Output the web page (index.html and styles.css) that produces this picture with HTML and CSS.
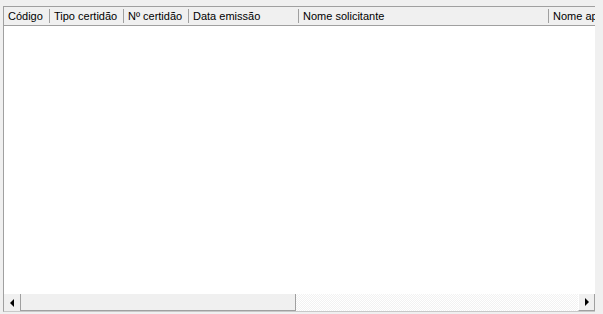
FILE: index.html
```html
<!DOCTYPE html>
<html lang="pt">
<head>
<meta charset="utf-8">
<link rel="stylesheet" href="styles.css">
</head>
<body>
<div class="list">
  <div class="header">
    <div class="col c1">Código</div><span class="sep"></span>
    <div class="col c2">Tipo certidão</div><span class="sep"></span>
    <div class="col c3">Nº certidão</div><span class="sep"></span>
    <div class="col c4">Data emissão</div><span class="sep"></span>
    <div class="col c5">Nome solicitante</div><span class="sep"></span>
    <div class="col c6">Nome apresentante</div>
  </div>
  <div class="body"></div>
  <div class="hscroll">
    <div class="btn left"><span class="tri-l"></span></div>
    <div class="thumb"></div>
    <div class="track"></div>
    <div class="btn right"><span class="tri-r"></span></div>
  </div>
</div>
</body>
</html>
```
FILE: styles.css
```css
html, body {
  margin: 0;
  padding: 0;
  background: #f0f0f0;
  width: 603px;
  height: 314px;
  overflow: hidden;
}
.list {
  margin: 6px 0 0 3px;
  width: 591px;
  height: 304px;
  border-top: 1px solid #a0a0a0;
  border-left: 1px solid #a0a0a0;
  border-bottom: 1px solid #c8c8c8;
  display: flex;
  flex-direction: column;
  overflow: hidden;
}
.header {
  height: 18px;
  flex: none;
  display: flex;
  align-items: center;
  background: #f0f0f0;
  border-bottom: 1px solid #a0a0a0;
  font-family: "Liberation Sans", Arial, sans-serif;
  font-size: 11px;
  color: #000;
  white-space: nowrap;
  overflow: hidden;
}
.col {
  flex: none;
  padding-left: 4px;
  box-sizing: border-box;
  line-height: 18px;
  overflow: hidden;
}
.c1 { width: 45px; }
.c2 { width: 73px; }
.c3 { width: 64px; }
.c4 { width: 109px; }
.c5 { width: 249px; }
.c6 { width: 120px; }
.sep {
  flex: none;
  width: 1px;
  height: 14px;
  background: #a0a0a0;
}
.body {
  flex: 1;
  background: #fff;
}
.hscroll {
  flex: none;
  height: 17px;
  display: flex;
  background: #fff;
}
.btn {
  flex: none;
  width: 16px;
  background: #f0f0f0;
  display: flex;
  align-items: center;
  justify-content: center;
  box-sizing: border-box;
}
.btn.left {
  border-right: 1px solid #a0a0a0;
  width: 17px;
}
.btn.right {
  width: 17px;
  border-left: 1px solid #fff;
  border-right: 1px solid #a0a0a0;
  border-bottom: 1px solid #a0a0a0;
}
.tri-l {
  width: 0; height: 0;
  border-top: 4px solid transparent;
  border-bottom: 4px solid transparent;
  border-right: 4px solid #000;
}
.tri-r {
  width: 0; height: 0;
  border-top: 4px solid transparent;
  border-bottom: 4px solid transparent;
  border-left: 4px solid #000;
}
.thumb {
  flex: none;
  width: 275px;
  background: #f0f0f0;
  box-sizing: border-box;
  border-right: 1px solid #a0a0a0;
  border-bottom: 1px solid #a0a0a0;
}
.track {
  flex: 1;
  background-color: #fff;
  background-image: repeating-conic-gradient(#f2f2f2 0 25%, #fff 0 50%);
  background-size: 2px 2px;
}
```
